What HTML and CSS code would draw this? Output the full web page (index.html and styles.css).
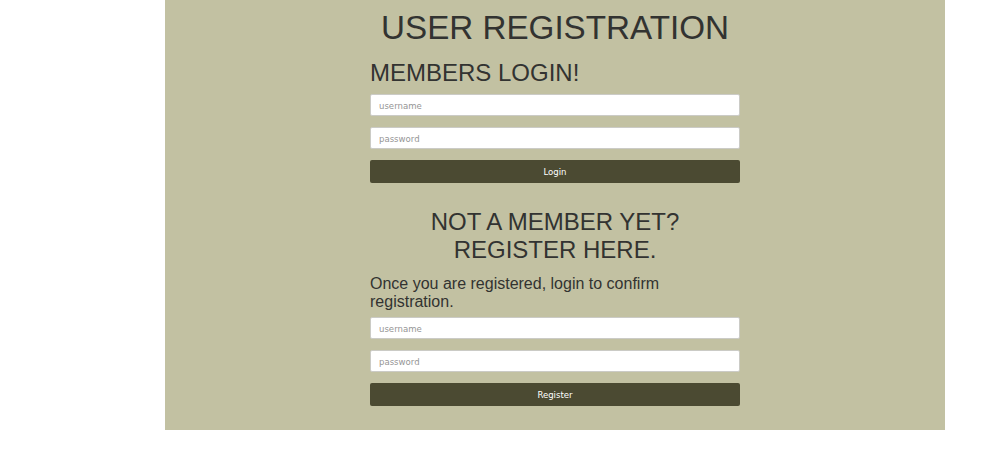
FILE: index.html
```
<!DOCTYPE html>
<html>
<head>
<meta charset="utf-8">
<title>User Registration</title>
<link rel="stylesheet" href="styles.css">
</head>
<body>
<div class="panel">
  <div class="column">
    <h1 class="title">USER REGISTRATION</h1>
    <h2 class="login-heading">MEMBERS LOGIN!</h2>
    <form class="form login-form">
      <input class="field" type="text" placeholder="username">
      <input class="field" type="password" placeholder="password">
      <button class="btn" type="button">Login</button>
    </form>
    <h2 class="register-heading">NOT A MEMBER YET?<br>REGISTER HERE.</h2>
    <p class="note">Once you are registered, login to confirm registration.</p>
    <form class="form register-form">
      <input class="field" type="text" placeholder="username">
      <input class="field" type="password" placeholder="password">
      <button class="btn" type="button">Register</button>
    </form>
  </div>
</div>
</body>
</html>
```
FILE: styles.css
```
html, body {
  margin: 0;
  padding: 0;
  background: #ffffff;
}

body {
  font-family: "Liberation Sans", Arial, sans-serif;
  color: #323331;
}

.panel {
  width: 780px;
  margin-left: 165px;
  background: #c2c1a2;
  padding: 9px 0 24px;
}

.column {
  width: 370px;
  margin: 0 auto;
}

.title {
  margin: 0;
  font-size: 33.2px;
  line-height: 38px;
  font-weight: normal;
  text-align: center;
}

.login-heading {
  margin: 12px 0 0;
  font-size: 24px;
  line-height: 28px;
  font-weight: normal;
}

.form {
  display: flex;
  flex-direction: column;
  gap: 11px;
}

.login-form {
  margin-top: 7px;
}

.register-form {
  margin-top: 6px;
}

.field {
  box-sizing: border-box;
  height: 22px;
  width: 100%;
  margin: 0;
  padding: 0 8px;
  border: 1px solid #cbcbc6;
  border-radius: 2px;
  background: #ffffff;
  font-family: "DejaVu Sans Condensed", "DejaVu Sans", sans-serif;
  font-stretch: condensed;
  font-size: 9.5px;
  color: #333;
  outline: none;
}

.field::placeholder {
  color: #959595;
}

.btn {
  box-sizing: border-box;
  height: 23px;
  width: 100%;
  margin: 0;
  padding: 0;
  border: none;
  border-radius: 2px;
  background: #4b4a32;
  color: #ffffff;
  font-family: "DejaVu Sans Condensed", "DejaVu Sans", sans-serif;
  font-stretch: condensed;
  font-size: 9.5px;
  cursor: pointer;
}

.register-heading {
  margin: 25px 0 0;
  font-size: 24px;
  line-height: normal;
  font-weight: normal;
  text-align: center;
}

.note {
  margin: 11px 0 0;
  font-size: 16px;
  line-height: normal;
}
```
